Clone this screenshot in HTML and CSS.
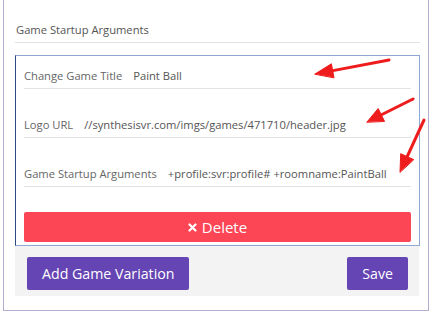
FILE: index.html
```html
<!DOCTYPE html>
<html>
  <head>
    <title>Game Startup Arguments</title>
    <link rel="stylesheet" href="styles.css">
  </head>
  <body>
    <div class="frame">
      <div class="section-title">Game Startup Arguments</div>

      <div class="variation">
        <div class="row">
          <span class="label">Change Game Title</span>
          <span class="value">Paint Ball</span>
        </div>
        <div class="row">
          <span class="label">Logo URL</span>
          <span class="value">//synthesisvr.com/imgs/games/471710/header.jpg</span>
        </div>
        <div class="row">
          <span class="label">Game Startup Arguments</span>
          <span class="value">+profile:svr:profile# +roomname:PaintBall</span>
        </div>
        <button class="btn-delete">
          <svg width="9" height="9" viewBox="0 0 9 9">
            <path d="M1.5 1.5 L7.5 7.5 M7.5 1.5 L1.5 7.5" stroke="#fff" stroke-width="2.2" stroke-linecap="round"/>
          </svg>
          Delete
        </button>
      </div>

      <div class="footer">
        <button class="btn">Add Game Variation</button>
        <button class="btn">Save</button>
      </div>
    </div>

    <svg class="marks" width="435" height="314" viewBox="0 0 435 314">
      <g stroke="#ee1c1c" stroke-width="3" stroke-linecap="round" fill="#ee1c1c">
        <line x1="389" y1="60" x2="333" y2="70.6"/>
        <polygon points="315,74 331.4,63.8 334,77.5" stroke-width="1"/>
        <line x1="413" y1="99" x2="381" y2="115"/>
        <polygon points="367,122 378.2,108.5 384.4,121.1" stroke-width="1"/>
        <line x1="424" y1="120" x2="407" y2="157"/>
        <polygon points="400,172 400.7,153.7 413.5,159.5" stroke-width="1"/>
      </g>
    </svg>
  </body>
</html>
```

FILE: styles.css
```css
body {
  margin: 0;
  font-family: "Open Sans", sans-serif;
  background-color: #fff;
  color: #555;
}
.frame {
  margin-left: 3px;
  width: 426px;
  height: 311px;
  box-sizing: border-box;
  border: 1px solid #b5aed2;
  border-top: none;
  padding-left: 11px;
}
.section-title {
  width: 404px;
  padding: 22px 0 4px 1px;
  line-height: 16px;
  font-size: 11.2px;
  color: #555;
  border-bottom: 1px solid #e2e2e2;
  margin-bottom: 12px;
}
.variation {
  width: 405px;
  box-sizing: border-box;
  border: 1px solid #8ea6d2;
  border-left-color: #2c4a82;
  padding: 6px 8px 3px 8px;
}
.row {
  display: flex;
  height: 26px;
  align-items: center;
  gap: 11px;
  font-size: 11.2px;
  border-bottom: 1px solid #e2e2e2;
  margin-bottom: 22px;
  white-space: nowrap;
}
.label {
  color: #666;
}
.value {
  color: #555;
}
.btn-delete {
  display: flex;
  align-items: center;
  justify-content: center;
  gap: 5px;
  width: 100%;
  height: 30px;
  margin-top: 25px;
  border: none;
  border-radius: 2px;
  background-color: #fd4655;
  color: #fff;
  font-family: "Open Sans", sans-serif;
  font-size: 15px;
}
.footer {
  display: flex;
  justify-content: space-between;
  width: 404px;
  box-sizing: border-box;
  background-color: #f3f3f3;
  padding: 11px 11px 6px 12px;
}
.btn {
  height: 33px;
  padding: 0 15px;
  border: none;
  border-radius: 2px;
  background-color: #6544b4;
  color: #fff;
  font-family: "Open Sans", sans-serif;
  font-size: 14.2px;
}
.marks {
  position: absolute;
  top: 0;
  left: 0;
  pointer-events: none;
}
```
